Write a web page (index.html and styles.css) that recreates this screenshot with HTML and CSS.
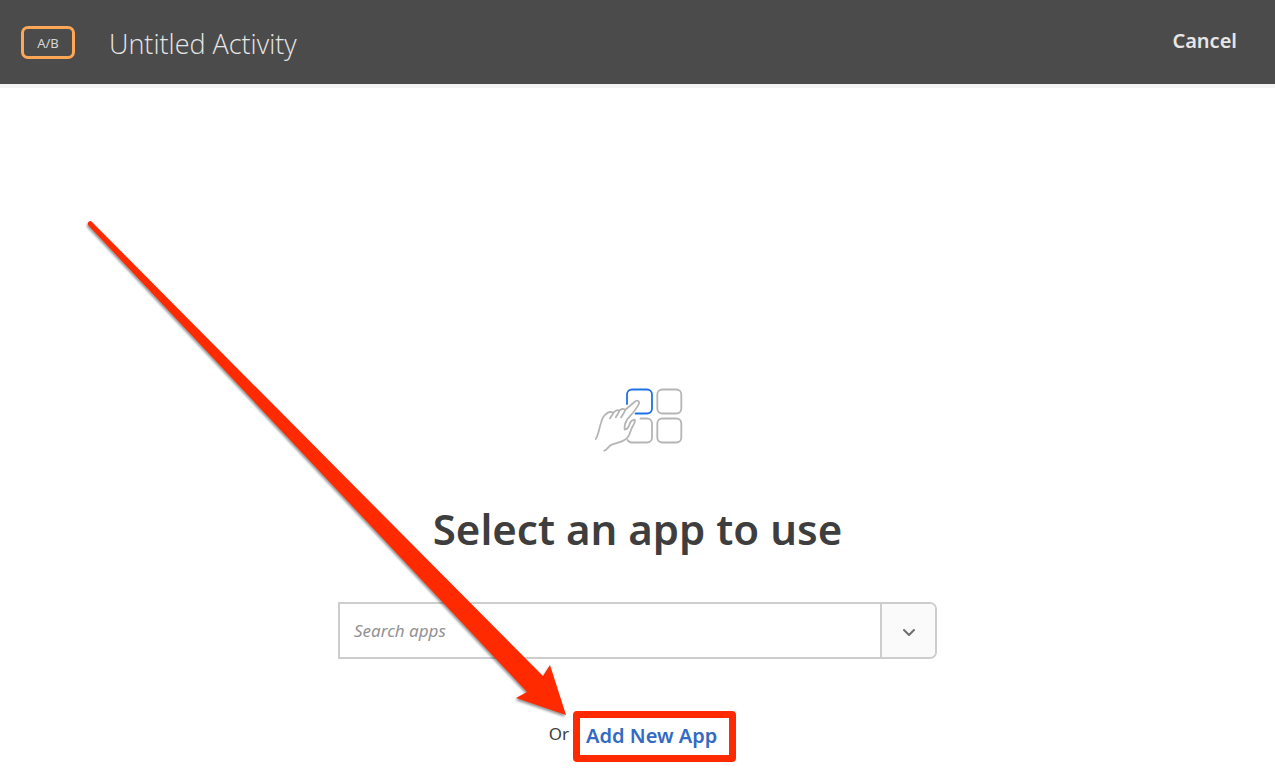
FILE: index.html
```html
<!DOCTYPE html>
<html lang="en">
<head>
<meta charset="utf-8">
<meta name="viewport" content="width=device-width, initial-scale=1">
<title>Untitled Activity</title>
<link rel="stylesheet" href="styles.css">
</head>
<body>
<header class="topbar">
  <span class="badge">A/B</span>
  <h1 class="title">Untitled Activity</h1>
  <button class="cancel" type="button">Cancel</button>
</header>
<main class="picker">
  <svg class="apps-icon" width="90" height="66" viewBox="0 0 90 66" fill="none" stroke="#b5b5b5" stroke-width="1.8" stroke-linecap="round" stroke-linejoin="round" aria-hidden="true">
    <rect x="64.300" y="2.500" width="24" height="24" rx="5"/>
    <rect x="64.300" y="31.500" width="24" height="24" rx="5"/>
    <path d="M47.500 31.500h6.500a5 5 0 0 1 5 5v14a5 5 0 0 1-5 5H39q-3 0-4.500-2.500"/>
    <path stroke="#2070e8" d="M34 17V7.500a5 5 0 0 1 5-5h15a5 5 0 0 1 5 5v14a5 5 0 0 1-5 5H42.500"/>
    <path d="M2.700 52C6 47 6 41 8 36C9 32 10 29 13 27C15 25 19 24 20 26C20 28 18 29 17 31.300"/>
    <path d="M20 26C22 24 25 22 26 24C26 26 24 28 22.700 30.300"/>
    <path d="M26 24C28 22 31 21 32 23C32 25 30 27 28 30.500"/>
    <path d="M32 23L41.500 15C44 12.500 47.500 14 45.500 17.500C43 23 38 28 34.500 32C32 36 31 39 31.700 42.500C37 42 35.500 37 38 34.500C39.500 33 42 32 42 33.500C42 37 38.500 40 37.700 43.700C36.500 48 35.500 51 31.500 53C27 56 22 56 18 58C15 60 13.500 63 11.300 63.700"/>
  </svg>
  <h2 class="heading">Select an app to use</h2>
  <div class="combo">
    <input class="search" type="text" placeholder="Search apps" aria-label="Search apps">
    <button class="toggle" type="button" aria-label="Show apps">
      <svg width="14" height="10" viewBox="0 0 14 10" fill="none" stroke="#6e6e6e" stroke-width="2" stroke-linecap="round" stroke-linejoin="round" aria-hidden="true"><path d="M2 2l5 5 5-5"/></svg>
    </button>
  </div>
  <p class="alternative"><span class="or">Or</span> <span class="highlight"><a class="add" href="#add">Add New App</a></span></p>
  <svg class="arrow" width="490" height="510" viewBox="0 0 490 510" aria-hidden="true">
    <path fill="#ff2a00" d="M11 11Q7 11 8 15L447 482L436 488L486 505L470 455L463 466Z"/>
  </svg>
</main>
</body>
</html>
```
FILE: styles.css
```css
* { box-sizing: border-box; }

body {
  margin: 0;
  background: #fff;
  color: #3e3e3e;
  font-family: "Noto Sans", "Open Sans", sans-serif;
}

.topbar {
  display: flex;
  align-items: center;
  height: 88px;
  padding: 0 38px 0 21px;
  background: #4b4b4b;
  border-bottom: 4px solid #f4f4f4;
  color: #e6e6e6;
}

.badge {
  width: 54px;
  height: 33px;
  border: 3px solid #ffa657;
  border-radius: 7px;
  color: #d6d6d6;
  font-size: 13px;
  line-height: 28px;
  text-align: center;
}

.title {
  flex: 1;
  margin: 4px 0 0 34px;
  font-family: "Open Sans", sans-serif;
  font-size: 27px;
  font-weight: 300;
  line-height: 36px;
}

.cancel {
  padding: 0 0 2px;
  border: 0;
  background: none;
  color: inherit;
  font: 600 20px/28px "Noto Sans", sans-serif;
}

.picker {
  position: relative;
  display: flex;
  flex-direction: column;
  align-items: center;
  max-width: 599px;
  margin: 0 auto;
  padding-top: 299px;
}

.apps-icon { display: block; }

.heading {
  margin: 44px 0 41px;
  font-size: 42px;
  font-weight: 600;
  line-height: 64px;
  white-space: nowrap;
}

.combo {
  display: flex;
  width: 100%;
  height: 57px;
  border: 2px solid #cdcdcd;
  border-radius: 0 7px 7px 0;
  overflow: hidden;
}

.search {
  flex: 1;
  min-width: 0;
  padding: 0 14px;
  border: 0;
  background: #fff;
  color: #3e3e3e;
  font: italic 17px/24px "Noto Sans", sans-serif;
}

.search::placeholder { color: #929292; opacity: 1; }

.toggle {
  display: grid;
  place-items: center;
  width: 55px;
  padding: 4px 0 0;
  border: 0;
  border-left: 2px solid #cdcdcd;
  background: #fafafa;
}

.alternative {
  display: flex;
  align-items: center;
  gap: 4px;
  margin: 52px 0 0;
  padding-left: 10px;
  line-height: 24px;
}

.or {
  padding-bottom: 6px;
  font-size: 17px;
}

.highlight {
  padding: 4px 12px 5px 6px;
  border: 7px solid #ff2a00;
  border-radius: 4px;
}

.add {
  display: block;
  color: #326ac4;
  font-size: 20px;
  font-weight: 600;
  line-height: 28px;
  text-decoration: none;
}

.arrow {
  position: absolute;
  top: 122px;
  left: -258px;
  filter: drop-shadow(-1px 2px 1px rgba(0, 0, 0, 0.4));
  pointer-events: none;
}
```
